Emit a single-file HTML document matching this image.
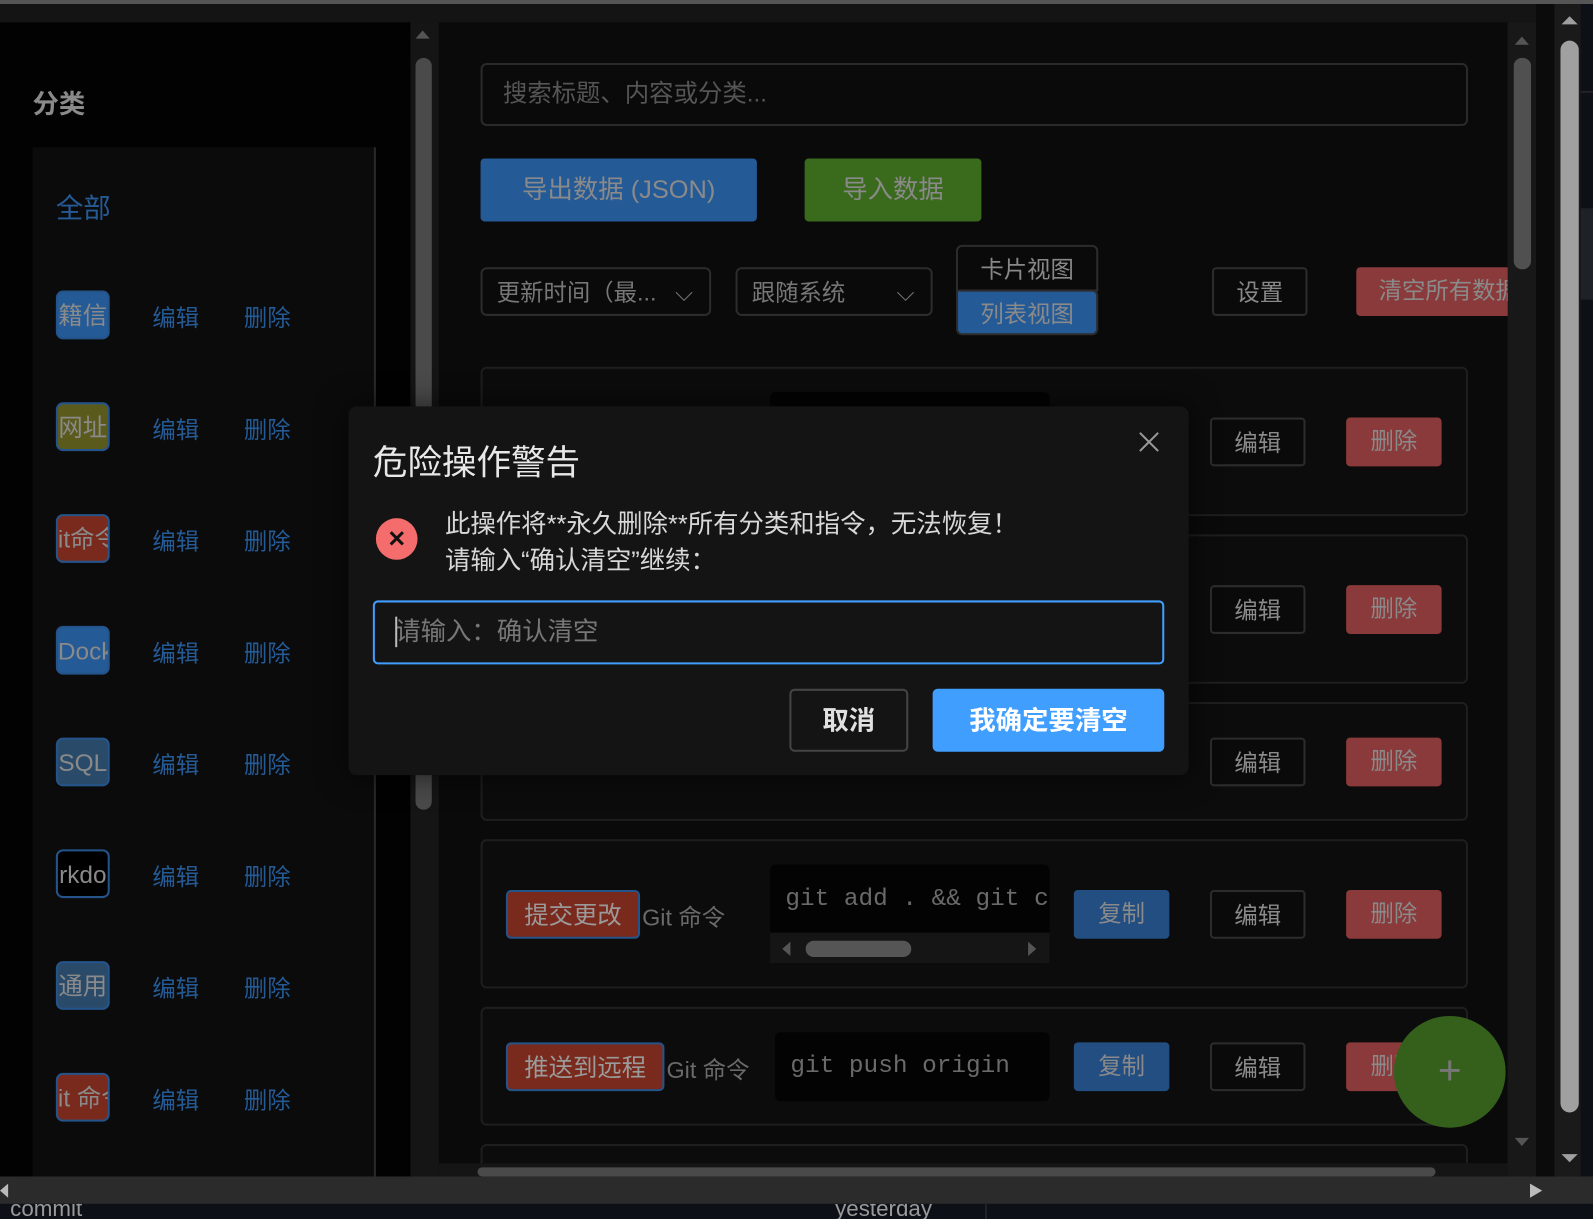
<!DOCTYPE html>
<html><head><meta charset="utf-8"><style>
*{box-sizing:border-box;margin:0;padding:0}
html,body{width:1593px;height:1219px;overflow:hidden;background:#0a0a0a}
#w{position:absolute;left:0;top:0;width:1568px;height:1200px;transform:scale(1.01594);transform-origin:0 0;font-family:"Liberation Sans","Noto Sans CJK SC",sans-serif;background:#111}
.a{position:absolute}
.cat{position:absolute;left:55px;width:53px;height:48px;border-radius:7px;border:2px solid #24548a;color:#8a8a8a;font-size:24px;line-height:48px;overflow:hidden;white-space:nowrap;text-align:center}
.lk{position:absolute;color:#245a96;font-size:23px}
.card{position:absolute;left:473px;width:972px;border:2px solid #1e1e1e;border-radius:6px;background:#0c0c0c}
.btn{position:absolute;height:48px;border-radius:4px;font-size:23px;line-height:46px;text-align:center;color:#8a8a8a}
.ed{border:2px solid #2c2c2c;background:#0a0a0a}
.del{background:#8a3a3a}
.cp{background:#224e82}
.tag{position:absolute;left:498px;height:48px;border-radius:5px;border:2px solid #24548a;background:#7a2a1c;color:#9a9a9a;font-size:24px;line-height:48px;padding:0 16px}
.code{position:absolute;background:#030303;border-radius:5px;color:#6a6a6a;font-family:"Liberation Mono",monospace;font-size:24px;overflow:hidden;white-space:nowrap}
</style></head><body><div id="w">
<div class="a" style="left:0;top:0;width:1568px;height:4px;background:#555"></div>
<div class="a" style="left:0;top:4px;width:1568px;height:18px;background:#141414"></div>
<div class="a" style="left:0;top:22px;width:404px;height:1136px;background:#020202"></div>
<div class="a" style="left:32px;top:82px;color:#8a8a8a;font-size:26px;font-weight:bold">分类</div>
<div class="a" style="left:32px;top:145px;width:338px;height:1013px;background:#0b0b0b;border-right:2px solid #2a2a2a"></div>
<div class="a" style="left:55px;top:183px;color:#245a96;font-size:27px">全部</div>
<div class="cat" style="top:286px;background:#245a96">籍信</div>
<div class="cat" style="top:396px;background:#5a5a1c">网址</div>
<div class="cat" style="top:506px;background:#7a2a1c">it命令</div>
<div class="cat" style="top:616px;background:#245a96">Docke</div>
<div class="cat" style="top:726px;background:#2a4a6a">SQL</div>
<div class="cat" style="top:836px;background:#000;border-color:#24548a">rkdo</div>
<div class="cat" style="top:946px;background:#2a4a6a">通用</div>
<div class="cat" style="top:1056px;background:#7a2a1c">it 命令</div>
<div class="lk" style="left:150px;top:294px">编辑</div><div class="lk" style="left:240px;top:294px">删除</div>
<div class="lk" style="left:150px;top:404px">编辑</div><div class="lk" style="left:240px;top:404px">删除</div>
<div class="lk" style="left:150px;top:514px">编辑</div><div class="lk" style="left:240px;top:514px">删除</div>
<div class="lk" style="left:150px;top:624px">编辑</div><div class="lk" style="left:240px;top:624px">删除</div>
<div class="lk" style="left:150px;top:734px">编辑</div><div class="lk" style="left:240px;top:734px">删除</div>
<div class="lk" style="left:150px;top:844px">编辑</div><div class="lk" style="left:240px;top:844px">删除</div>
<div class="lk" style="left:150px;top:954px">编辑</div><div class="lk" style="left:240px;top:954px">删除</div>
<div class="lk" style="left:150px;top:1064px">编辑</div><div class="lk" style="left:240px;top:1064px">删除</div>
<div class="a" style="left:404px;top:22px;width:28px;height:1136px;background:#151515"></div>
<div class="a" style="left:409px;top:30px;width:0;height:0;border:7px solid transparent;border-bottom:8px solid #555;border-top:0"></div>
<div class="a" style="left:409px;top:57px;width:16px;height:740px;border-radius:8px;background:#4a4a4a"></div>
<div class="a" style="left:432px;top:22px;width:1052px;height:1136px;background:#0a0a0a"></div>
<div class="a" style="left:473px;top:62px;width:972px;height:62px;border:2px solid #2a2a2a;border-radius:6px;color:#555;font-size:24px;line-height:58px;padding-left:20px">搜索标题、内容或分类...</div>
<div class="btn" style="left:473px;top:156px;width:272px;height:62px;line-height:62px;background:#245a96;font-size:25px">导出数据 (JSON)</div>
<div class="btn" style="left:792px;top:156px;width:174px;height:62px;line-height:62px;background:#3a6a1c;font-size:25px">导入数据</div>
<div class="btn ed" style="left:473px;top:263px;width:227px;text-align:left;padding-left:14px;border-radius:6px;color:#777">更新时间（最...<span style="position:absolute;right:16px;top:0">⌵</span></div>
<div class="btn ed" style="left:724px;top:263px;width:194px;text-align:left;padding-left:14px;border-radius:6px;color:#777">跟随系统<span style="position:absolute;right:16px;top:0">⌵</span></div>
<div class="btn ed" style="left:941px;top:241px;width:140px;height:46px;line-height:44px;border-radius:6px 6px 0 0;color:#888">卡片视图</div>
<div class="btn" style="left:941px;top:285px;width:140px;height:45px;line-height:45px;background:#245a96;border:2px solid #2c2c2c;border-radius:0 6px 6px 6px">列表视图</div>
<div class="btn ed" style="left:1193px;top:263px;width:94px;color:#888">设置</div>
<div class="btn del" style="left:1335px;top:263px;width:150px;border-radius:4px 0 0 4px;white-space:nowrap;overflow:hidden;text-align:left;padding-left:22px">清空所有数据</div>
<div class="card" style="top:361px;height:147px"></div>
<div class="code" style="left:758px;top:386px;width:275px;height:20px"></div>
<div class="btn ed" style="left:1191px;top:411px;width:94px">编辑</div><div class="btn del" style="left:1325px;top:411px;width:94px">删除</div>
<div class="card" style="top:526px;height:147px"></div>
<div class="btn ed" style="left:1191px;top:576px;width:94px">编辑</div><div class="btn del" style="left:1325px;top:576px;width:94px">删除</div>
<div class="card" style="top:691px;height:117px"></div>
<div class="btn ed" style="left:1191px;top:726px;width:94px">编辑</div><div class="btn del" style="left:1325px;top:726px;width:94px">删除</div>
<div class="card" style="top:826px;height:147px"></div>
<div class="tag" style="top:876px">提交更改</div>
<div class="a" style="left:632px;top:884px;color:#6a6a6a;font-size:23px">Git 命令</div>
<div class="code" style="left:758px;top:851px;width:275px;height:97px;padding:21px 0 0 15px">git add . &amp;&amp; git commit</div>
<div class="a" style="left:758px;top:918px;width:275px;height:30px;background:#151515"></div>
<div class="a" style="left:793px;top:926px;width:104px;height:16px;border-radius:8px;background:#555"></div>
<div class="a" style="left:770px;top:927px;border:7px solid transparent;border-right:8px solid #555;border-left:0"></div>
<div class="a" style="left:1012px;top:927px;border:7px solid transparent;border-left:8px solid #555;border-right:0"></div>
<div class="btn cp" style="left:1057px;top:876px;width:94px">复制</div>
<div class="btn ed" style="left:1191px;top:876px;width:94px">编辑</div><div class="btn del" style="left:1325px;top:876px;width:94px">删除</div>
<div class="card" style="top:991px;height:117px"></div>
<div class="tag" style="top:1026px">推送到远程</div>
<div class="a" style="left:656px;top:1034px;color:#6a6a6a;font-size:23px">Git 命令</div>
<div class="code" style="left:763px;top:1016px;width:270px;height:68px;line-height:68px;padding-left:15px">git push origin</div>
<div class="btn cp" style="left:1057px;top:1026px;width:94px">复制</div>
<div class="btn ed" style="left:1191px;top:1026px;width:94px">编辑</div><div class="btn del" style="left:1325px;top:1026px;width:94px">删除</div>
<div class="card" style="top:1126px;height:40px"></div>
<div class="a" style="left:1372px;top:1000px;width:110px;height:110px;border-radius:50%;background:#34601c;color:#777;font-size:40px;line-height:108px;text-align:center">+</div>
<div class="a" style="left:432px;top:1145px;width:1052px;height:13px;background:#151515"></div>
<div class="a" style="left:470px;top:1149px;width:943px;height:9px;border-radius:5px;background:#4a4a4a"></div>
<div class="a" style="left:1484px;top:22px;width:28px;height:1136px;background:#181818"></div>
<div class="a" style="left:1491px;top:36px;border:7px solid transparent;border-bottom:8px solid #555;border-top:0"></div>
<div class="a" style="left:1490px;top:57px;width:17px;height:208px;border-radius:8px;background:#505050"></div>
<div class="a" style="left:1491px;top:1120px;border:7px solid transparent;border-top:8px solid #555;border-bottom:0"></div>
<div class="a" style="left:1512px;top:4px;width:18px;height:1154px;background:#0b0b0b"></div>
<div class="a" style="left:1530px;top:4px;width:26px;height:1154px;background:#1a1a1a"></div>
<div class="a" style="left:1537px;top:16px;border:8px solid transparent;border-bottom:8px solid #a0a0a0;border-top:0"></div>
<div class="a" style="left:1536px;top:40px;width:18px;height:1055px;border-radius:9px;background:#a0a0a0"></div>
<div class="a" style="left:1537px;top:1136px;border:8px solid transparent;border-top:8px solid #a0a0a0;border-bottom:0"></div>
<div class="a" style="left:1556px;top:4px;width:12px;height:1154px;background:#0d1117"></div>
<div class="a" style="left:1556px;top:90px;width:12px;height:1px;background:#333"></div>
<div class="a" style="left:1556px;top:205px;width:12px;height:90px;background:#1e2228"></div>
<div class="a" style="left:0;top:1158px;width:1568px;height:27px;background:#2b2b2b"></div>
<div class="a" style="left:1506px;top:1165px;border:7px solid transparent;border-left:12px solid #bbb;border-right:0"></div>
<div class="a" style="left:0;top:1165px;border:7px solid transparent;border-right:8px solid #bbb;border-left:0"></div>
<div class="a" style="left:0;top:1185px;width:1568px;height:15px;background:#0d1117;overflow:hidden">
<div class="a" style="left:10px;top:-8px;color:#999;font-size:22px">commit</div>
<div class="a" style="left:822px;top:-8px;color:#999;font-size:22px">yesterday</div>
<div class="a" style="left:970px;top:0;width:1px;height:15px;background:#333"></div></div>
<div class="a" style="left:343px;top:400px;width:827px;height:363px;background:#141414;border-radius:8px;box-shadow:0 0 30px rgba(0,0,0,.6)">
<div class="a" style="left:24px;top:28px;color:#e8e8e8;font-size:34px">危险操作警告</div>
<svg class="a" style="left:778px;top:25px" width="20" height="20" viewBox="0 0 20 20"><path d="M1 1L19 19M19 1L1 19" stroke="#999" stroke-width="2"/></svg>
<div class="a" style="left:27px;top:110px;width:41px;height:41px;border-radius:50%;background:#f56c6c;color:#111;font-size:22px;line-height:41px;text-align:center;font-weight:bold">✕</div>
<div class="a" style="left:95px;top:98px;color:#d8d8d8;font-size:25px;line-height:36px">此操作将**永久删除**所有分类和指令，无法恢复！<br>请输入“确认清空”继续：</div>
<div class="a" style="left:24px;top:191px;width:779px;height:63px;border:2px solid #409eff;border-radius:5px;color:#777;font-size:25px;line-height:58px;padding-left:20px"><span style="position:absolute;left:20px;top:14px;width:2px;height:30px;background:#bbb"></span>请输入：确认清空</div>
<div class="a" style="left:434px;top:278px;width:117px;height:62px;border:2px solid #444;border-radius:5px;color:#e0e0e0;font-size:26px;line-height:58px;text-align:center;font-weight:bold">取消</div>
<div class="a" style="left:575px;top:278px;width:228px;height:62px;background:#409eff;border-radius:5px;color:#fff;font-size:26px;line-height:62px;text-align:center;font-weight:bold">我确定要清空</div>
</div>
</div></body></html>
